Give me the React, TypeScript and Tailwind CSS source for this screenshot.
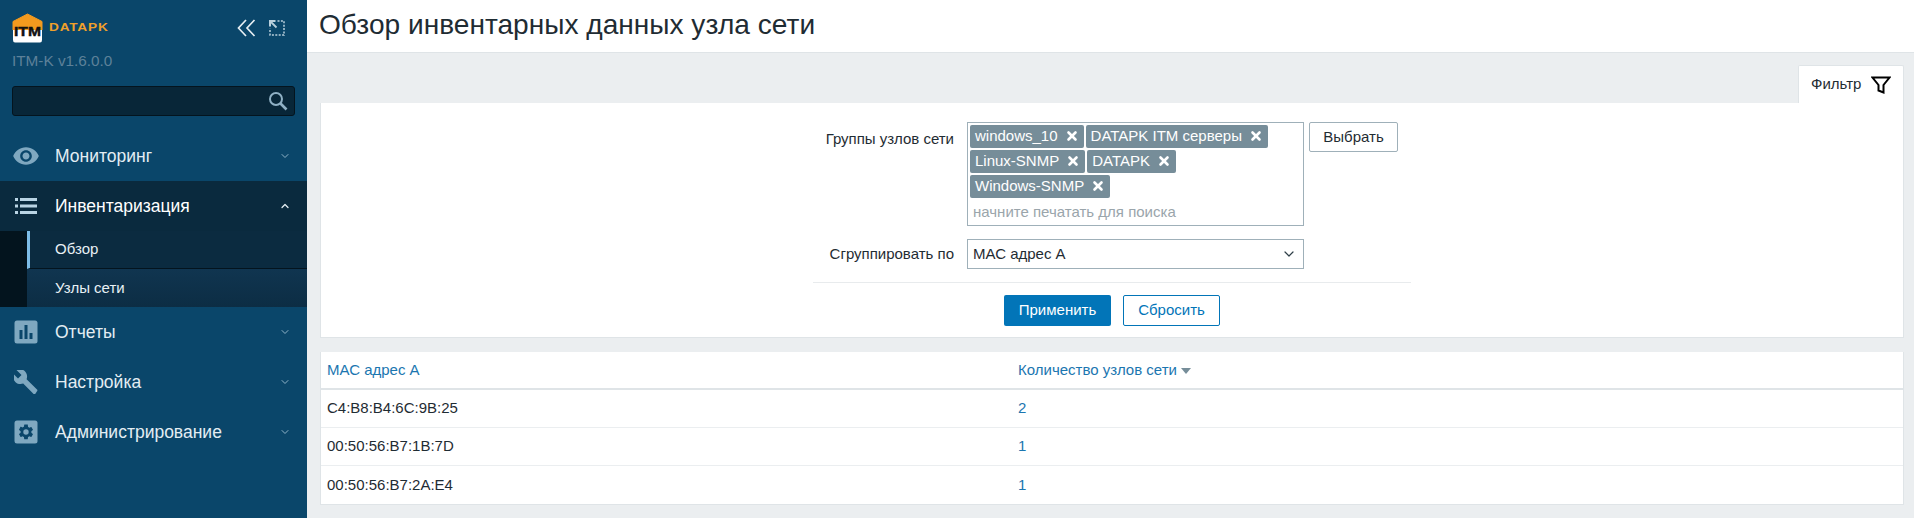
import { ChevronDown, ChevronUp, X } from "lucide-react";

const arial = "font-['Liberation_Sans',Arial,sans-serif]";

function Logo() {
  return (
    <div className="flex items-center gap-[6px]">
      <svg width="31" height="30" viewBox="0 0 31 30">
        <path d="M1 8.500 L15.500 1 L30 8.500 V17 H1 Z" fill="#f39a1e" stroke="#f39a1e" strokeLinejoin="round" />
        <path d="M1 17 H30 V27 Q30 29.500 28 29.500 H3 Q1 29.500 1 27 Z" fill="#fff" />
        <text x="15.500" y="23" textAnchor="middle" fontFamily="Liberation Sans" fontWeight="700" fontSize="12" textLength="27" lengthAdjust="spacingAndGlyphs" fill="#111" stroke="#111" strokeWidth="0.4">ITM</text>
      </svg>
      <span className="origin-left scale-x-[1.3] text-[10.500px] font-bold tracking-[0.6px] text-[#f0a02a]">DATAPK</span>
    </div>
  );
}

function Eye() {
  return (
    <svg width="28" height="28" viewBox="0 0 24 24" fill="#7fa8c0">
      <path d="M12 4.500C7 4.500 2.730 7.610 1 12c1.730 4.390 6 7.500 11 7.500s9.270-3.110 11-7.500c-1.730-4.390-6-7.500-11-7.500zM12 17c-2.760 0-5-2.240-5-5s2.240-5 5-5 5 2.240 5 5-2.240 5-5 5zm0-8c-1.660 0-3 1.340-3 3s1.340 3 3 3 3-1.340 3-3-1.340-3-3-3z" />
    </svg>
  );
}

function ListIco() {
  return (
    <svg width="24" height="24" viewBox="0 0 24 24" fill="#b9d4e4">
      <rect x="1" y="4" width="3" height="3" />
      <rect x="1" y="10.500" width="3" height="3" />
      <rect x="1" y="17" width="3" height="3" />
      <rect x="6" y="4" width="17" height="3" />
      <rect x="6" y="10.500" width="17" height="3" />
      <rect x="6" y="17" width="17" height="3" />
    </svg>
  );
}

function Bars() {
  return (
    <svg width="24" height="24" viewBox="0 0 24 24">
      <rect x="0.500" y="0.500" width="23" height="23" rx="2.500" fill="#7fa8c0" />
      <rect x="5.500" y="10" width="3" height="9" fill="#0a466a" />
      <rect x="10.500" y="5" width="3" height="14" fill="#0a466a" />
      <rect x="15.500" y="13" width="3" height="6" fill="#0a466a" />
    </svg>
  );
}

function Wrench() {
  return (
    <svg width="24" height="24" viewBox="0 0 24 24" fill="#7fa8c0">
      <path d="M23 19.600 12.600 9.200c1-2.600.500-5.700-1.700-7.900C8.600-1 5.200-1.400 2.500 0l5 5-3.500 3.500-5-5C-2.400 6.200-1 9.600 1.300 11.900c2.200 2.200 5.300 2.700 7.900 1.700L19.600 24c.500.500 1.200.500 1.600 0l1.800-2.800c.500-.400.500-1.200 0-1.600z" />
    </svg>
  );
}

function Gear() {
  return (
    <svg width="24" height="24" viewBox="0 0 24 24">
      <rect x="0.500" y="0.500" width="23" height="23" rx="2.500" fill="#7fa8c0" />
      <g transform="translate(3 3) scale(0.75)">
        <path fill="#0a466a" d="M19.140 12.940c.040-.300.060-.610.060-.940s-.020-.640-.070-.940l2.030-1.580a.490.490 0 0 0 .120-.610l-1.920-3.320a.490.490 0 0 0-.590-.220l-2.390.960a7.030 7.030 0 0 0-1.620-.940l-.360-2.540A.480.480 0 0 0 13.920 2h-3.840a.480.480 0 0 0-.480.410l-.360 2.540c-.590.240-1.130.570-1.620.940l-2.390-.960a.480.480 0 0 0-.590.220L2.720 8.870a.480.480 0 0 0 .120.610l2.030 1.580c-.050.300-.090.630-.090.940s.020.640.07.940l-2.030 1.580a.490.490 0 0 0-.120.610l1.920 3.320c.120.220.370.290.590.220l2.390-.960c.500.380 1.030.700 1.620.940l.360 2.540c.050.240.240.410.480.410h3.840c.240 0 .440-.17.470-.41l.36-2.540c.590-.240 1.130-.560 1.620-.940l2.390.960c.220.080.470 0 .59-.220l1.920-3.320a.480.480 0 0 0-.12-.61l-2.010-1.580zM12 15.600a3.600 3.600 0 1 1 0-7.200 3.600 3.600 0 0 1 0 7.200z" />
      </g>
    </svg>
  );
}

function MenuItem({ icon, label, open }: { icon: React.ReactNode; label: string; open?: boolean }) {
  return (
    <div className="flex h-[50px] items-center">
      <div className="flex w-[55px] justify-center pr-[3px]">{icon}</div>
      <span className={`flex-1 text-[17.500px] ${open ? "text-white" : "text-[#e3edf3]"}`}>{label}</span>
      {open ? (
        <ChevronUp size={12} strokeWidth={2.500} className="mr-[16px] text-[#e3edf3]" />
      ) : (
        <ChevronDown size={12} strokeWidth={2} className="mr-[16px] text-[#8fb3c8]" />
      )}
    </div>
  );
}

function Sidebar() {
  return (
    <aside className="flex h-[518px] w-[307px] shrink-0 flex-col bg-[#0a466a]">
      <div className="flex h-[52px] items-center justify-between pl-[12px] pr-[22px] pt-[3px]">
        <Logo />
        <div className="flex items-center gap-[13px]">
          <svg width="19" height="18" viewBox="0 0 19 18" fill="none" stroke="#e6eef3" strokeWidth="1.700">
            <path d="M9 1 1.500 9 9 17" />
            <path d="M17.500 1 10 9l7.500 8" />
          </svg>
          <svg width="16" height="16" viewBox="0 0 16 16" fill="none" stroke="#b9cfdc" strokeWidth="1.500">
            <path d="M8.500 1h6.500v14H1V8.500" strokeDasharray="2 1.400" />
            <path d="M2 2l5.500 5.500" strokeWidth="1.800" />
            <path d="M1 6.500V1h5.500" strokeWidth="2" />
          </svg>
        </div>
      </div>
      <div className="pl-[12px] text-[15.300px] leading-[18px] text-[#5d8199]">ITM-K v1.6.0.0</div>
      <div className="mx-[12px] mt-[16px] flex h-[30px] items-center justify-end rounded-[3px] border border-[#04141e] bg-[#082638] pr-[6px]">
        <svg width="20" height="20" viewBox="0 0 20 20" fill="none" stroke="#8fb0c4">
          <circle cx="8" cy="8" r="6" strokeWidth="2" />
          <path d="m12.500 12.500 6 6" strokeWidth="2.600" />
        </svg>
      </div>
      <div className="mt-[15px]">
        <MenuItem icon={<Eye />} label="Мониторинг" />
        <div className="bg-[#0a2a3e]">
          <MenuItem icon={<ListIco />} label="Инвентаризация" open />
          <div className="flex">
            <div className="w-[27px] bg-[#03141e]" />
            <div className="flex-1 text-[15px] text-[#e8f0f5]">
              <div className="flex h-[38px] items-center border-b border-[#04141e] border-l-[3px] border-l-[#7dbde8] bg-[#0b2b40] pl-[25px]">Обзор</div>
              <div className="flex h-[38px] items-center bg-gradient-to-b from-[#103550] to-[#0c2d44] pl-[28px]">Узлы сети</div>
            </div>
          </div>
        </div>
        <MenuItem icon={<Bars />} label="Отчеты" />
        <MenuItem icon={<Wrench />} label="Настройка" />
        <MenuItem icon={<Gear />} label="Администрирование" />
      </div>
    </aside>
  );
}

function Tag({ label }: { label: string }) {
  return (
    <span className="flex h-[23px] items-center gap-[7px] rounded-[2px] bg-[#768d99] pl-[5px] pr-[5px] text-[15px] text-white">
      {label}
      <X size={14} strokeWidth={4.500} className="-mt-[2px]" />
    </span>
  );
}

function FilterForm() {
  return (
    <div className="flex h-[235px] flex-col items-center border-x border-b border-[#dfe4e7] bg-white pt-[19px]">
      <div className="mr-[1px] flex w-[597px] flex-col">
        <div className="flex">
          <div className="w-[141px] whitespace-nowrap pt-[6px] text-right text-[15px] text-[#1f2c33]">Группы узлов сети</div>
          <div className="ml-[13px] h-[104px] w-[337px] border border-[#9fb0b9] px-[2px] pt-[2px]">
            <div className="flex flex-wrap gap-[2px]">
              <Tag label="windows_10" />
              <Tag label="DATAPK ITM серверы" />
              <Tag label="Linux-SNMP" />
              <Tag label="DATAPK" />
              <Tag label="Windows-SNMP" />
            </div>
            <div className="pl-[3px] pt-[5px] text-[15px] leading-[18px] text-[#9aa5ab]">начните печатать для поиска</div>
          </div>
          <button className="ml-[5px] h-[30px] w-[89px] rounded-[2px] border border-[#9fb0b9] text-[15px] text-[#1f2c33]">Выбрать</button>
        </div>
        <div className="mt-[13px] flex items-center">
          <div className="w-[141px] whitespace-nowrap text-right text-[15px] text-[#1f2c33]">Сгруппировать по</div>
          <div className="ml-[13px] flex h-[30px] w-[337px] items-center justify-between border border-[#9fb0b9] pl-[5px] pr-[6px] text-[15px] text-[#1f2c33]">
            МАС адрес А
            <ChevronDown size={16} strokeWidth={1.800} className="text-[#2f3f48]" />
          </div>
        </div>
      </div>
      <div className="mt-[13px] w-[598px] border-t border-[#e8ebed]" />
      <div className="mt-[12px] flex gap-[12px]">
        <button className="h-[31px] w-[107px] rounded-[2px] bg-[#0275b8] text-[15px] text-white">Применить</button>
        <button className="h-[31px] w-[97px] rounded-[2px] border border-[#0275b8] text-[15px] text-[#0275b8]">Сбросить</button>
      </div>
    </div>
  );
}

const rows = [
  ["C4:B8:B4:6C:9B:25", "2"],
  ["00:50:56:B7:1B:7D", "1"],
  ["00:50:56:B7:2A:E4", "1"],
];

function HostsTable() {
  return (
    <div className="mt-[14px] border-x border-b border-[#dfe4e7] bg-white text-[15px]">
      <div className="flex h-[38px] items-center border-b-2 border-[#dfe4e7] text-[#1b76b0]">
        <div className="w-[697px] pl-[6px]">МАС адрес А</div>
        <div className="flex items-center gap-[4px]">
          Количество узлов сети
          <span className="mt-[2px] h-0 w-0 border-x-[5px] border-t-[6px] border-x-transparent border-t-[#768d99]" />
        </div>
      </div>
      {rows.map(([mac, count], i) => (
        <div key={mac} className={`flex h-[38px] items-center ${i < 2 ? "border-b border-[#ebeef0]" : ""}`}>
          <div className="w-[697px] pl-[6px] text-[#1f2c33]">{mac}</div>
          <div className="text-[#1b76b0]">{count}</div>
        </div>
      ))}
    </div>
  );
}

function FunnelIcon() {
  return (
    <svg width="20" height="20" viewBox="0 0 20 20" fill="none" stroke="#000" strokeWidth="2">
      <path d="M1.500 2.500h17L12.500 10v7.500l-5-2V10z" strokeLinejoin="miter" />
    </svg>
  );
}

export default function App() {
  return (
    <div className={`flex h-[518px] w-[1914px] overflow-hidden ${arial}`}>
      <Sidebar />
      <main className="flex flex-1 flex-col bg-[#ebeef0]">
        <header className="flex h-[53px] items-center border-b border-[#dfe4e7] bg-white pb-[2px] pl-[12px] text-[28.100px] text-[#1f2c33]">
          Обзор инвентарных данных узла сети
        </header>
        <div className="flex flex-col pl-[13px] pr-[10px] pt-[12px]">
          <div className="flex justify-end">
            <div className="flex h-[38px] w-[106px] items-center gap-[10px] rounded-t-[2px] border-x border-t border-[#dfe4e7] bg-white pl-[12px] text-[15px] text-[#1f2c33]">
              Фильтр
              <FunnelIcon />
            </div>
          </div>
          <FilterForm />
          <HostsTable />
        </div>
      </main>
    </div>
  );
}
